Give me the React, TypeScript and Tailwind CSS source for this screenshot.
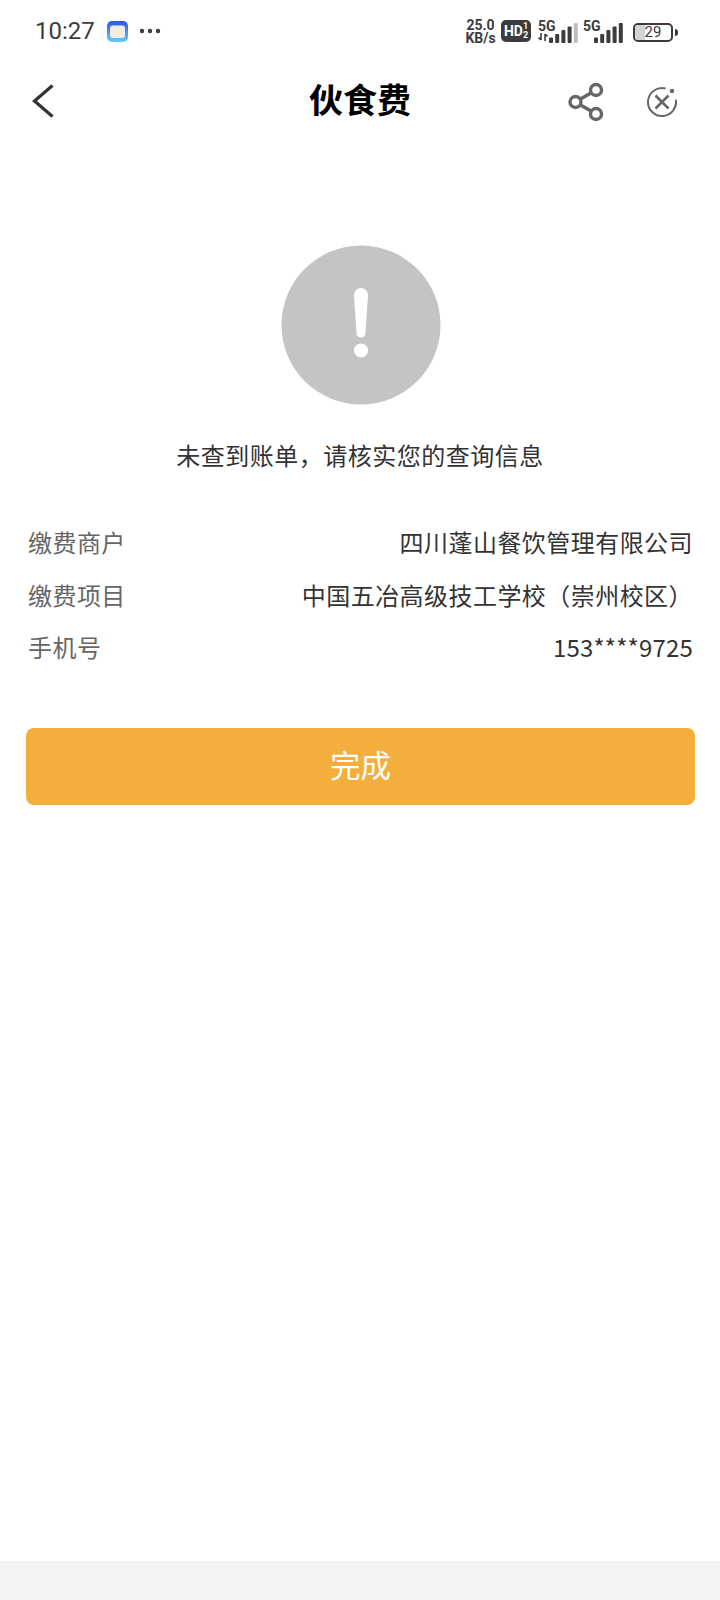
import React from 'react';

const cjk = 'font-["Noto_Sans_CJK_SC","Noto_Sans",sans-serif]';

const rows = [
  { label: '缴费商户', value: '四川蓬山餐饮管理有限公司', spacing: 'tracking-[0.45px]' },
  { label: '缴费项目', value: '中国五冶高级技工学校（崇州校区）', spacing: 'tracking-[0.45px]' },
  { label: '手机号', value: '153****9725', spacing: 'tracking-[0.18px]' },
];

const SignalBars = ({ dim }: { dim?: boolean }) => (
  <svg className="mt-[3px]" width="32" height="20" viewBox="0 0 32 20">
    <rect x="1" y="14.5" width="4" height="5.5" rx="1" fill="#3c3c3c" />
    <rect x="7.2" y="11" width="4" height="9" rx="1" fill="#3c3c3c" />
    <rect x="13.4" y="7" width="4" height="13" rx="1" fill="#3c3c3c" />
    <rect x="19.6" y="3.5" width="4" height="16.5" rx="1" fill="#3c3c3c" />
    <rect x="25.8" y="0" width="4" height="20" rx="1" fill={dim ? '#bdbdbd' : '#3c3c3c'} />
  </svg>
);

const StatusBar = () => (
  <div className="flex h-[62px] items-center justify-between pl-[35px] pr-[42px] text-[#3c3c3c]">
    <div className="flex items-center">
      <span className="font-['Roboto',sans-serif] text-[24px] leading-none">10:27</span>
      <svg className="ml-[12px]" width="21" height="21" viewBox="0 0 21 21">
        <defs>
          <linearGradient id="appIcon" x1="0" y1="0" x2="0" y2="1">
            <stop offset="0" stopColor="#2f54e0" />
            <stop offset="1" stopColor="#5fd0fb" />
          </linearGradient>
        </defs>
        <rect width="21" height="21" rx="5" fill="url(#appIcon)" />
        <rect x="3" y="4.5" width="15" height="12.5" rx="3" fill="#f3ecdf" />
      </svg>
      <svg className="ml-[11px]" width="22" height="6" viewBox="0 0 22 6">
        <circle cx="3" cy="3" r="2.2" fill="#3c3c3c" />
        <circle cx="11" cy="3" r="2.2" fill="#3c3c3c" />
        <circle cx="19" cy="3" r="2.2" fill="#3c3c3c" />
      </svg>
    </div>
    <div className="flex items-center font-['Roboto',sans-serif]">
      <div className="mt-[2px] flex w-[31px] flex-col items-center text-[14px] font-bold leading-[13px]">
        <span>25.0</span>
        <span>KB/s</span>
      </div>
      <div className="ml-[5px] flex h-[22px] w-[30px] items-center justify-center rounded-[5px] bg-[#3c3c3c] text-white">
        <span className="text-[14px] font-bold leading-none">HD</span>
        <span className="flex flex-col items-center text-[9px] font-bold leading-[9px]">
          <span>1</span>
          <span>2</span>
        </span>
      </div>
      <div className="ml-[7px] flex h-[22px] w-[19px] flex-col">
        <span className="text-[14px] font-bold leading-[13px]">5G</span>
        <svg width="10" height="8" viewBox="0 0 10 8">
          <path d="M3 0v7M3 7L0.5 4.5M7 8V1M7 1l2.5 2.5" stroke="#3c3c3c" strokeWidth="1.6" fill="none" />
        </svg>
      </div>
      <div className="-ml-[9px]">
        <SignalBars dim />
      </div>
      <div className="ml-[3px] flex h-[22px] w-[19px] flex-col">
        <span className="text-[14px] font-bold leading-[13px]">5G</span>
      </div>
      <div className="-ml-[9px]">
        <SignalBars />
      </div>
      <div className="relative ml-[8px] mt-[2px] flex items-center">
        <div className="relative flex h-[19px] w-[40px] items-center justify-center overflow-hidden rounded-[5px] border-2 border-[#3c3c3c]">
          <div className="absolute inset-y-0 left-0 w-[10px] bg-[#d4d4d4]" />
          <span className="relative text-[15px] leading-none">29</span>
        </div>
        <div className="ml-[2px] h-[7px] w-[3px] rounded-r-sm bg-[#3c3c3c]" />
      </div>
    </div>
  </div>
);

const NavBar = () => (
  <div className="relative flex h-[78px] items-center justify-center">
    <svg className="absolute left-[31px] top-[21px]" width="24" height="36" viewBox="0 0 24 36">
      <path d="M21.5 2.5L3.5 18l18 15.5" stroke="#333333" strokeWidth="3.2" fill="none" />
    </svg>
    <span className={`${cjk} pb-[4px] text-[34px] font-bold leading-none text-black`}>伙食费</span>
    <svg className="absolute left-[568px] top-[20px]" width="38" height="40" viewBox="0 0 38 40">
      <g stroke="#666666" strokeWidth="3.4" fill="none">
        <circle cx="28" cy="8" r="5.5" />
        <circle cx="7.5" cy="20" r="5.5" />
        <circle cx="28" cy="32" r="5.5" />
        <path d="M12.5 17L23 11M12.5 23L23 29" />
      </g>
    </svg>
    <svg className="absolute left-[646px] top-[24px]" width="32" height="32" viewBox="0 0 32 32">
      <path d="M19.6 2.5A14 14 0 1 0 29.8 13.6" stroke="#666666" strokeWidth="2" fill="none" />
      <path d="M9.5 9.5l13 13M22.5 9.5l-13 13" stroke="#666666" strokeWidth="2.6" fill="none" />
      <circle cx="26" cy="5" r="2.2" fill="#666666" />
    </svg>
  </div>
);

export default function App() {
  return (
    <div className={`${cjk} flex h-[1600px] w-[720px] flex-col bg-white`}>
      <StatusBar />
      <NavBar />

      <div className="mt-[105px] flex justify-center pl-[2px]">
        <svg width="160" height="160" viewBox="0 0 160 160">
          <circle cx="80" cy="80" r="79.5" fill="#c4c4c4" />
          <path d="M73 50a7 7 0 0 1 14 0l-2.5 38a4.5 4.5 0 0 1-9 0z" fill="#ffffff" />
          <circle cx="80" cy="105.5" r="7" fill="#ffffff" />
        </svg>
      </div>

      <p className="mt-[32px] text-center text-[24px] leading-[36px] tracking-[0.5px] text-[#333333]">
        未查到账单，请核实您的查询信息
      </p>

      <div className="mt-[43px] flex flex-col pl-[28px] pr-[27px]">
        {rows.map((row) => (
          <div key={row.label} className="flex h-[52.5px] items-center justify-between text-[24px]">
            <span className="tracking-[0.45px] text-[#666666]">{row.label}</span>
            <span className={`${row.spacing} text-[#333333]`}>{row.value}</span>
          </div>
        ))}
      </div>

      <div className="mt-[54.5px] pl-[26px] pr-[25px]">
        <div className="flex h-[77px] items-center justify-center rounded-[8px] bg-[#f3ae3d] pb-[3px] text-[30.5px] text-white">
          完成
        </div>
      </div>

      <div className="mt-auto h-[39px] bg-[#f3f3f3]" />
    </div>
  );
}
